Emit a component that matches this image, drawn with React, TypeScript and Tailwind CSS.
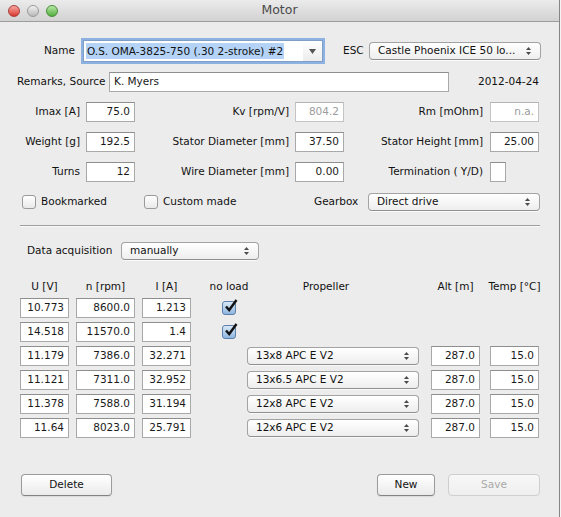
import type { ReactNode } from 'react';

const FONT = { fontFamily: '"DejaVu Sans", "Liberation Sans", sans-serif' };

function Field({
  value,
  w,
  muted = false,
  align = 'right',
}: {
  value: string;
  w: string;
  muted?: boolean;
  align?: 'left' | 'right';
}) {
  return (
    <div
      className={`${w} h-[20px] shrink-0 bg-white border border-[#a9a9a9] border-t-[#8e8e8e] flex items-center px-[4px] ${
        align === 'right' ? 'justify-end' : 'justify-start'
      } ${muted ? 'text-[#9c9c9c] border-[#c4c4c4] border-t-[#b4b4b4]' : 'text-[#1a1a1a]'}`}
    >
      <span className="whitespace-nowrap">{value}</span>
    </div>
  );
}

function Arrows() {
  return (
    <svg width="7" height="10" viewBox="0 0 7 10" className="shrink-0">
      <path d="M3.5 1 L6 4 L1 4 Z" fill="#4a4a4a" />
      <path d="M3.5 9 L6 6 L1 6 Z" fill="#4a4a4a" />
    </svg>
  );
}

function PopUp({ label, w }: { label: string; w: string }) {
  return (
    <div
      className={`${w} h-[18px] shrink-0 rounded-[4px] border border-[#a3a3a3] border-b-[#8f8f8f] bg-gradient-to-b from-white to-[#eeeeee] shadow-[0_1px_0_rgba(255,255,255,0.8)] flex items-center pl-[8px] pr-[8px] text-[#111]`}
    >
      <span className="flex-1 whitespace-nowrap overflow-hidden">{label}</span>
      <Arrows />
    </div>
  );
}

function Check({ checked = false }: { checked?: boolean }) {
  if (!checked) {
    return (
      <div className="w-[14px] h-[14px] shrink-0 rounded-[3px] border border-[#9a9a9a] bg-gradient-to-b from-white to-[#e9e9e9]" />
    );
  }
  return (
    <div className="relative w-[14px] h-[14px] shrink-0 rounded-[3px] border border-[#5d7fa8] bg-gradient-to-b from-[#d9e9f8] to-[#8fb5e0]">
      <svg
        width="16"
        height="16"
        viewBox="0 0 16 16"
        className="absolute -top-[4px] left-[0px]"
      >
        <path
          d="M3 8.5 L6.2 12 L13.5 2"
          fill="none"
          stroke="#111"
          strokeWidth="2.4"
          strokeLinejoin="miter"
        />
      </svg>
    </div>
  );
}

function Button({
  children,
  w,
  disabled = false,
}: {
  children: ReactNode;
  w: string;
  disabled?: boolean;
}) {
  return (
    <div
      className={`${w} h-[22px] shrink-0 rounded-[4px] border flex items-center justify-center bg-gradient-to-b ${
        disabled
          ? 'border-[#cfcfcf] from-[#f7f7f7] to-[#efefef] text-[#a9a9a9]'
          : 'border-[#9b9b9b] border-b-[#838383] from-white to-[#ebebeb] text-[#111] shadow-[0_1px_1px_rgba(0,0,0,0.08)]'
      }`}
    >
      {children}
    </div>
  );
}

function Light({ from, to, border }: { from: string; to: string; border: string }) {
  return (
    <div
      className={`w-[12px] h-[12px] rounded-full border ${border} bg-gradient-to-b ${from} ${to}`}
    />
  );
}

const rows = [
  { u: '10.773', n: '8600.0', i: '1.213', noLoad: true },
  { u: '14.518', n: '11570.0', i: '1.4', noLoad: true },
  { u: '11.179', n: '7386.0', i: '32.271', prop: '13x8 APC E V2' },
  { u: '11.121', n: '7311.0', i: '32.952', prop: '13x6.5 APC E V2' },
  { u: '11.378', n: '7588.0', i: '31.194', prop: '12x8 APC E V2' },
  { u: '11.64', n: '8023.0', i: '25.791', prop: '12x6 APC E V2' },
];

export default function App() {
  return (
    <div
      className="w-[561px] h-[517px] bg-[#f4f4f4] overflow-hidden text-[10.5px] text-[#111]"
      style={FONT}
    >
      <div className="w-[560px] h-[517px] bg-[#ececec] border-r border-[#858585] flex flex-col">
        {/* Title bar */}
        <div className="relative h-[22px] shrink-0 bg-gradient-to-b from-[#ebebeb] to-[#d2d2d2] border-b border-[#9d9d9d] flex items-center justify-center">
          <div className="absolute left-[8px] top-[5px] flex gap-[7px]">
            <Light from="from-[#f6a5a1]" to="to-[#d8322c]" border="border-[#a8403a]" />
            <Light from="from-[#f2f2f2]" to="to-[#b9b9b9]" border="border-[#9a9a9a]" />
            <Light from="from-[#b7e9a5]" to="to-[#4fae3c]" border="border-[#4b8a3b]" />
          </div>
          <span className="text-[12.5px] text-[#4a4a4a]">Motor</span>
        </div>

        {/* Name / ESC */}
        <div className="mt-[18px] h-[22px] flex items-center">
          <span className="w-[75px] text-right">Name</span>
          <div className="ml-[8px] w-[240px] h-[22px] flex bg-white border border-[#7f9fc8] shadow-[0_0_0_2px_rgba(110,158,222,0.75)]">
            <div className="flex-1 flex items-center pl-[2px]">
              <span className="bg-[#b4d3f7] px-[1px] whitespace-nowrap leading-[16px]">
                O.S. OMA-3825-750 (.30 2-stroke) #2
              </span>
            </div>
            <div className="w-[19px] flex items-center justify-center bg-gradient-to-b from-white to-[#ececec]">
              <svg width="7" height="5" viewBox="0 0 7 5">
                <path d="M0 0 L7 0 L3.5 5 Z" fill="#555" />
              </svg>
            </div>
          </div>
          <span className="ml-[20px] w-[20px]">ESC</span>
          <div className="ml-[6px]">
            <PopUp label="Castle Phoenix ICE 50 lo..." w="w-[172px]" />
          </div>
        </div>

        {/* Remarks */}
        <div className="mt-[10px] h-[20px] flex items-center">
          <span className="ml-[17px] w-[91px] whitespace-nowrap">Remarks, Source</span>
          <div className="ml-[1px]">
            <Field value="K. Myers" w="w-[340px]" align="left" />
          </div>
          <span className="flex-1 pr-[20px] text-right whitespace-nowrap">2012-04-24</span>
        </div>

        {/* Imax / Kv / Rm */}
        <div className="mt-[10px] h-[20px] flex items-center">
          <span className="w-[80px] text-right">Imax [A]</span>
          <div className="ml-[6px]"><Field value="75.0" w="w-[49px]" /></div>
          <span className="w-[154px] text-right">Kv [rpm/V]</span>
          <div className="ml-[6px]"><Field value="804.2" w="w-[49px]" muted /></div>
          <span className="w-[139px] text-right">Rm [mOhm]</span>
          <div className="ml-[7px]"><Field value="n.a." w="w-[49px]" muted /></div>
        </div>

        {/* Weight / Stator */}
        <div className="mt-[10px] h-[20px] flex items-center">
          <span className="w-[80px] text-right">Weight [g]</span>
          <div className="ml-[6px]"><Field value="192.5" w="w-[49px]" /></div>
          <span className="w-[154px] text-right">Stator Diameter [mm]</span>
          <div className="ml-[6px]"><Field value="37.50" w="w-[49px]" /></div>
          <span className="w-[139px] text-right">Stator Height [mm]</span>
          <div className="ml-[7px]"><Field value="25.00" w="w-[49px]" /></div>
        </div>

        {/* Turns / Wire / Termination */}
        <div className="mt-[10px] h-[20px] flex items-center">
          <span className="w-[80px] text-right">Turns</span>
          <div className="ml-[6px]"><Field value="12" w="w-[49px]" /></div>
          <span className="w-[154px] text-right">Wire Diameter [mm]</span>
          <div className="ml-[6px]"><Field value="0.00" w="w-[49px]" /></div>
          <span className="w-[139px] text-right">Termination ( Y/D)</span>
          <div className="ml-[7px]"><Field value="" w="w-[16px]" /></div>
        </div>

        {/* Checkboxes / Gearbox */}
        <div className="mt-[10px] h-[20px] flex items-center">
          <div className="ml-[22px]"><Check /></div>
          <span className="ml-[5px] w-[103px]">Bookmarked</span>
          <Check />
          <span className="ml-[5px] w-[151px]">Custom made</span>
          <span className="w-[45px]">Gearbox</span>
          <div className="ml-[9px]">
            <PopUp label="Direct drive" w="w-[172px]" />
          </div>
        </div>

        {/* Separator */}
        <div className="mt-[13px] ml-[20px] w-[520px] h-px bg-[#9e9e9e] shadow-[0_1px_0_#f8f8f8]" />

        {/* Data acquisition */}
        <div className="mt-[16px] h-[18px] flex items-center">
          <span className="ml-[27px] w-[94px]">Data acquisition</span>
          <PopUp label="manually" w="w-[138px]" />
        </div>

        {/* Table header */}
        <div className="mt-[19px] h-[16px] flex items-center">
          <div className="ml-[20px] w-[49px] flex justify-center">U [V]</div>
          <div className="ml-[7px] w-[59px] flex justify-center">n [rpm]</div>
          <div className="ml-[7px] w-[49px] flex justify-center">I [A]</div>
          <div className="ml-[31px] w-[14px] flex justify-center whitespace-nowrap">no load</div>
          <div className="ml-[11px] w-[172px] flex justify-center pr-[14px]">Propeller</div>
          <div className="ml-[12px] w-[49px] flex justify-center">Alt [m]</div>
          <div className="ml-[10px] w-[49px] flex justify-center whitespace-nowrap">Temp [°C]</div>
        </div>

        {/* Table rows */}
        <div className="mt-[3px] flex flex-col gap-[4px]">
          {rows.map((r) => (
            <div key={r.u} className="h-[20px] flex items-center">
              <div className="ml-[20px]"><Field value={r.u} w="w-[49px]" /></div>
              <div className="ml-[7px]"><Field value={r.n} w="w-[59px]" /></div>
              <div className="ml-[7px]"><Field value={r.i} w="w-[49px]" /></div>
              <div className="ml-[31px] w-[14px] flex justify-center">
                {r.noLoad && <Check checked />}
              </div>
              {r.prop && (
                <>
                  <div className="ml-[11px]">
                    <PopUp label={r.prop} w="w-[172px]" />
                  </div>
                  <div className="ml-[12px]"><Field value="287.0" w="w-[49px]" /></div>
                  <div className="ml-[10px]"><Field value="15.0" w="w-[49px]" /></div>
                </>
              )}
            </div>
          ))}
        </div>

        {/* Buttons */}
        <div className="mt-[36px] h-[22px] flex items-center">
          <div className="ml-[21px]"><Button w="w-[91px]">Delete</Button></div>
          <div className="ml-[265px]"><Button w="w-[58px]">New</Button></div>
          <div className="ml-[13px]"><Button w="w-[92px]" disabled>Save</Button></div>
        </div>
      </div>
    </div>
  );
}
